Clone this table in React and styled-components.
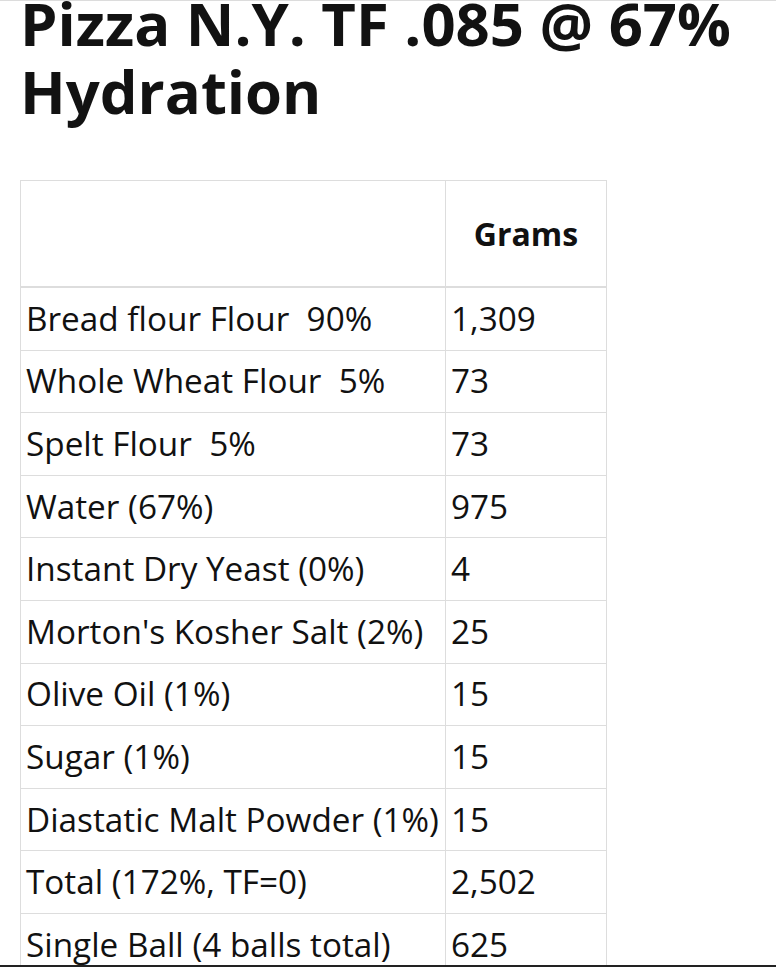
import styled, { createGlobalStyle } from 'styled-components';

const GlobalStyle = createGlobalStyle`
  body {
    margin: 0;
    background: #fff;
    color: #111;
    font-family: "Open Sans", "Noto Sans", sans-serif;
  }
`;

const Page = styled.main`
  padding: 0 20px;
`;

const Title = styled.h1`
  margin: -11px 0 55px;
  font-size: 59.8px;
  line-height: 68px;
  font-weight: 700;
  color: #121212;
`;

const Recipe = styled.table`
  border-collapse: collapse;
  table-layout: fixed;
  width: 586px;
  font-size: 33.3px;
`;

const HeadCell = styled.th`
  height: 105px;
  padding: 0;
  border: 1px solid #ddd;
  border-bottom-width: 2px;
  font-size: 32px;
  font-weight: 700;
  text-align: center;
`;

const Cell = styled.td`
  height: 61.6px;
  padding: 0 5px;
  border: 1px solid #ddd;
  white-space: nowrap;
  line-height: 1.2;
`;

const TopEdge = styled.div`
  position: fixed;
  top: 0;
  left: 0;
  right: 0;
  height: 1px;
  background: #dcdcdc;
`;

const BottomBar = styled.div`
  position: fixed;
  bottom: 0;
  left: 0;
  right: 0;
  height: 2px;
  background: #222;
`;

const rows = [
  ['Bread flour Flour\u00a0 90%', '1,309'],
  ['Whole Wheat Flour\u00a0 5%', '73'],
  ['Spelt Flour\u00a0 5%', '73'],
  ['Water (67%)', '975'],
  ['Instant Dry Yeast (0%)', '4'],
  ["Morton's Kosher Salt (2%)", '25'],
  ['Olive Oil (1%)', '15'],
  ['Sugar (1%)', '15'],
  ['Diastatic Malt Powder (1%)', '15'],
  ['Total (172%, TF=0)', '2,502'],
  ['Single Ball (4 balls total)', '625'],
];

export default function App() {
  return (
    <>
      <GlobalStyle />
      <TopEdge />
      <Page>
        <Title>Pizza N.Y. TF .085 @ 67% Hydration</Title>
        <Recipe>
          <colgroup>
            <col style={{ width: 425 }} />
            <col style={{ width: 161 }} />
          </colgroup>
          <thead>
            <tr>
              <HeadCell />
              <HeadCell>Grams</HeadCell>
            </tr>
          </thead>
          <tbody>
            {rows.map(([name, grams]) => (
              <tr key={name}>
                <Cell>{name}</Cell>
                <Cell>{grams}</Cell>
              </tr>
            ))}
          </tbody>
        </Recipe>
      </Page>
      <BottomBar />
    </>
  );
}
